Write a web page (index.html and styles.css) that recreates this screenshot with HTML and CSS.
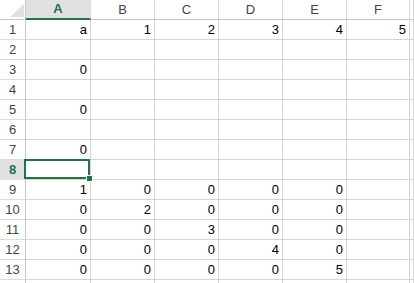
FILE: index.html
```html
<!DOCTYPE html>
<html>
<head>
<meta charset="utf-8">
<link rel="stylesheet" href="styles.css">
</head>
<body>
<div class="sheet">
  <div class="corner"><span class="tri"></span></div>
  <div class="ch active">A</div><div class="ch">B</div><div class="ch">C</div><div class="ch">D</div><div class="ch">E</div><div class="ch">F</div><div class="ch"></div>

  <div class="rh">1</div><div class="c">a</div><div class="c">1</div><div class="c">2</div><div class="c">3</div><div class="c">4</div><div class="c">5</div><div class="c"></div>
  <div class="rh">2</div><div class="c"></div><div class="c"></div><div class="c"></div><div class="c"></div><div class="c"></div><div class="c"></div><div class="c"></div>
  <div class="rh">3</div><div class="c">0</div><div class="c"></div><div class="c"></div><div class="c"></div><div class="c"></div><div class="c"></div><div class="c"></div>
  <div class="rh">4</div><div class="c"></div><div class="c"></div><div class="c"></div><div class="c"></div><div class="c"></div><div class="c"></div><div class="c"></div>
  <div class="rh">5</div><div class="c">0</div><div class="c"></div><div class="c"></div><div class="c"></div><div class="c"></div><div class="c"></div><div class="c"></div>
  <div class="rh">6</div><div class="c"></div><div class="c"></div><div class="c"></div><div class="c"></div><div class="c"></div><div class="c"></div><div class="c"></div>
  <div class="rh">7</div><div class="c">0</div><div class="c"></div><div class="c"></div><div class="c"></div><div class="c"></div><div class="c"></div><div class="c"></div>
  <div class="rh active">8</div><div class="c selected"><span class="handle"></span></div><div class="c"></div><div class="c"></div><div class="c"></div><div class="c"></div><div class="c"></div><div class="c"></div>
  <div class="rh">9</div><div class="c">1</div><div class="c">0</div><div class="c">0</div><div class="c">0</div><div class="c">0</div><div class="c"></div><div class="c"></div>
  <div class="rh">10</div><div class="c">0</div><div class="c">2</div><div class="c">0</div><div class="c">0</div><div class="c">0</div><div class="c"></div><div class="c"></div>
  <div class="rh">11</div><div class="c">0</div><div class="c">0</div><div class="c">3</div><div class="c">0</div><div class="c">0</div><div class="c"></div><div class="c"></div>
  <div class="rh">12</div><div class="c">0</div><div class="c">0</div><div class="c">0</div><div class="c">4</div><div class="c">0</div><div class="c"></div><div class="c"></div>
  <div class="rh">13</div><div class="c">0</div><div class="c">0</div><div class="c">0</div><div class="c">0</div><div class="c">5</div><div class="c"></div><div class="c"></div>
  <div class="rh"></div><div class="c"></div><div class="c"></div><div class="c"></div><div class="c"></div><div class="c"></div><div class="c"></div><div class="c"></div>
</div>
</body>
</html>
```

FILE: styles.css
```css
html, body {
  margin: 0;
  padding: 0;
  background: #ffffff;
  overflow: hidden;
}
.sheet {
  display: grid;
  grid-template-columns: 26px 65px 64px 64px 64px 64px 63px 1fr;
  grid-auto-rows: 20px;
  width: 414px;
  height: 283px;
  overflow: hidden;
  font-family: "Liberation Sans", Arial, sans-serif;
  font-size: 13px;
  line-height: 19px;
  color: #000000;
}
.sheet > div {
  box-sizing: border-box;
  border-right: 1px solid #d4d4d4;
  border-bottom: 1px solid #d4d4d4;
  white-space: nowrap;
  overflow: visible;
}
.corner {
  position: relative;
  background: #ffffff;
  border-right-color: #c6c6c6 !important;
  border-bottom-color: #c6c6c6 !important;
}
.tri {
  position: absolute;
  right: 1px;
  bottom: 2px;
  width: 14px;
  height: 13px;
  background: #dfdfdf;
  clip-path: polygon(100% 0, 100% 100%, 0 100%);
}
.ch {
  text-align: center;
  color: #444444;
  background: #ffffff;
  border-right-color: #dcdcdc !important;
  border-bottom-color: #c6c6c6 !important;
}
.ch.active {
  background: #e1e1e1;
  color: #217346;
  font-weight: bold;
  border-bottom: 2px solid #217346 !important;
  line-height: 18px;
}
.rh {
  text-align: center;
  color: #444444;
  background: #ffffff;
  border-right-color: #c6c6c6 !important;
  border-bottom-color: #dcdcdc !important;
}
.rh.active {
  background: #e1e1e1;
  color: #217346;
  font-weight: bold;
}
.c {
  text-align: right;
  padding-right: 3px;
}
.c.selected {
  position: relative;
}
.c.selected::after {
  content: "";
  position: absolute;
  top: -1px;
  left: -2px;
  right: 0;
  bottom: 0;
  border: 2px solid #217346;
}
.handle {
  position: absolute;
  right: -3px;
  bottom: -3px;
  width: 5px;
  height: 5px;
  background: #217346;
  border: 1px solid #ffffff;
  z-index: 2;
}
```
